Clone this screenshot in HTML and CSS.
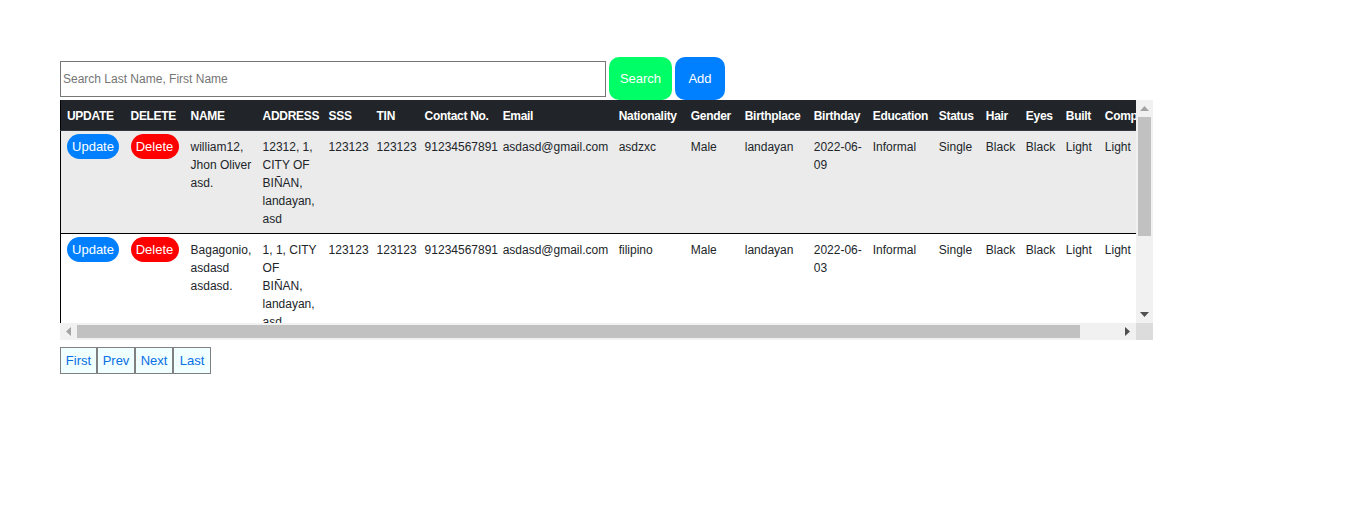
FILE: index.html
```html
<!DOCTYPE html>
<html>
<head>
<meta charset="utf-8">
<link rel="stylesheet" href="styles.css">
</head>
<body>
<div class="page">
  <div class="searchbar">
    <input class="search-input" type="text" placeholder="Search Last Name, First Name">
    <button class="btn-search">Search</button>
    <button class="btn-add">Add</button>
  </div>
  <div class="table-frame">
    <div class="viewport">
      <table class="grid">
        <colgroup>
          <col class="w64"><col class="w60"><col class="w72"><col class="w66"><col class="w48"><col class="w48"><col class="w78"><col class="w116"><col class="w72"><col class="w54"><col class="w69"><col class="w59"><col class="w66"><col class="w47"><col class="w40"><col class="w40"><col class="w39"><col class="w80">
        </colgroup>
        <thead>
          <tr>
            <th>UPDATE</th><th>DELETE</th><th>NAME</th><th>ADDRESS</th><th>SSS</th><th>TIN</th><th>Contact No.</th><th>Email</th><th>Nationality</th><th>Gender</th><th>Birthplace</th><th>Birthday</th><th>Education</th><th>Status</th><th>Hair</th><th>Eyes</th><th>Built</th><th>Complexion</th>
          </tr>
        </thead>
        <tbody>
          <tr class="odd">
            <td><button class="pill pill-blue">Update</button></td>
            <td><button class="pill pill-red">Delete</button></td>
            <td>william12, Jhon Oliver asd.</td>
            <td>12312, 1, CITY OF BIÑAN, landayan, asd</td>
            <td>123123</td><td>123123</td><td>91234567891</td><td>asdasd@gmail.com</td><td>asdzxc</td><td>Male</td><td>landayan</td><td>2022-06-09</td><td>Informal</td><td>Single</td><td>Black</td><td>Black</td><td>Light</td><td>Light</td>
          </tr>
          <tr>
            <td><button class="pill pill-blue">Update</button></td>
            <td><button class="pill pill-red">Delete</button></td>
            <td>Bagagonio, asdasd asdasd.</td>
            <td>1, 1, CITY OF BIÑAN, landayan, asd</td>
            <td>123123</td><td>123123</td><td>91234567891</td><td>asdasd@gmail.com</td><td>filipino</td><td>Male</td><td>landayan</td><td>2022-06-03</td><td>Informal</td><td>Single</td><td>Black</td><td>Black</td><td>Light</td><td>Light</td>
          </tr>
          <tr class="odd">
            <td><button class="pill pill-blue">Update</button></td>
            <td><button class="pill pill-red">Delete</button></td>
            <td>Santos, Maria Clara asd.</td>
            <td>2, 3, CITY OF BIÑAN, landayan, asd</td>
            <td>123123</td><td>123123</td><td>91234567891</td><td>asdasd@gmail.com</td><td>filipino</td><td>Female</td><td>landayan</td><td>2022-06-01</td><td>Informal</td><td>Single</td><td>Black</td><td>Black</td><td>Light</td><td>Light</td>
          </tr>
        </tbody>
      </table>
    </div>
    <div class="vbar">
      <div class="sb-btn"><svg width="9" height="5" viewBox="0 0 9 5"><polygon points="0,5 9,5 4.5,0" fill="#a3a3a3"/></svg></div>
      <div class="vtrack"><div class="vthumb"></div></div>
      <div class="sb-btn"><svg width="9" height="5" viewBox="0 0 9 5"><polygon points="0,0 9,0 4.5,5" fill="#505050"/></svg></div>
    </div>
    <div class="hbar">
      <div class="sb-btn"><svg width="5" height="9" viewBox="0 0 5 9"><polygon points="5,0 5,9 0,4.5" fill="#a3a3a3"/></svg></div>
      <div class="htrack"><div class="hthumb"></div></div>
      <div class="sb-btn"><svg width="5" height="9" viewBox="0 0 5 9"><polygon points="0,0 0,9 5,4.5" fill="#505050"/></svg></div>
    </div>
    <div class="corner"></div>
  </div>
  <div class="pager">
    <button class="pg pg-first">First</button><button class="pg pg-mid">Prev</button><button class="pg pg-mid">Next</button><button class="pg pg-mid">Last</button>
  </div>
</div>
</body>
</html>
```

FILE: styles.css
```css
html, body {
  margin: 0;
  padding: 0;
  background: #ffffff;
}

.page {
  padding: 57px 0 0 60px;
  font-family: "Liberation Sans", Arial, sans-serif;
}

.searchbar {
  display: flex;
  align-items: center;
  gap: 3px;
  height: 43px;
}

.search-input {
  box-sizing: border-box;
  width: 546px;
  height: 36px;
  margin: 0;
  padding: 0 2px;
  border: 1px solid #767676;
  font-family: "Liberation Sans", Arial, sans-serif;
  font-size: 12px;
  color: #222;
  outline: none;
}
.search-input::placeholder {
  color: #757575;
}

.btn-search, .btn-add {
  box-sizing: border-box;
  height: 43px;
  border: none;
  border-radius: 10px;
  color: #ffffff;
  font-family: "Liberation Sans", Arial, sans-serif;
  font-size: 13px;
  padding: 0;
}
.btn-search {
  width: 63px;
  background: #00ff66;
}
.btn-add {
  width: 50px;
  background: #0080ff;
}

/* table frame with fake classic scrollbars */
.table-frame {
  display: grid;
  grid-template-columns: 1076px 17px;
  grid-template-rows: 223px 17px;
  width: 1093px;
}

.viewport {
  overflow: hidden;
}

.vbar {
  display: flex;
  flex-direction: column;
  background: #f1f1f1;
}
.hbar {
  display: flex;
  flex-direction: row;
  background: #f1f1f1;
}
.sb-btn {
  flex: 0 0 17px;
  width: 17px;
  height: 17px;
  display: flex;
  align-items: center;
  justify-content: center;
}
.vtrack {
  flex: 1;
  display: flex;
  flex-direction: column;
}
.vthumb {
  height: 119px;
  margin: 0 2px;
  background: #c1c1c1;
}
.htrack {
  flex: 1;
  display: flex;
  align-items: center;
}
.hthumb {
  width: 1003px;
  height: 13px;
  background: #c1c1c1;
}
.corner {
  background: #dcdcdc;
}

.grid {
  table-layout: fixed;
  width: 1119px;
  border-collapse: collapse;
  border-left: 1px solid #000;
  font-family: "Liberation Sans", Arial, sans-serif;
  font-size: 12px;
  line-height: 18px;
  color: #212529;
}

.w39 { width: 39px; }
.w40 { width: 40px; }
.w47 { width: 47px; }
.w48 { width: 48px; }
.w54 { width: 54px; }
.w59 { width: 59px; }
.w60 { width: 60px; }
.w64 { width: 64px; }
.w66 { width: 66px; }
.w69 { width: 69px; }
.w72 { width: 72px; }
.w78 { width: 78px; }
.w80 { width: 80px; }
.w116 { width: 116px; }

.grid th {
  background: #212529;
  color: #ffffff;
  font-weight: bold;
  text-align: left;
  white-space: nowrap;
  letter-spacing: -0.3px;
  padding: 7px 4px 5px 6px;
  border-bottom: 1px solid #32383e;
  overflow: hidden;
}

.grid td {
  vertical-align: top;
  text-align: left;
  padding: 7px 4px 5px 6px;
  border-bottom: 1px solid #000;
}

.grid tr.odd td {
  background: #ebebeb;
}

.pill {
  box-sizing: border-box;
  height: 25px;
  margin-top: -4px;
  border: none;
  border-radius: 13px;
  color: #ffffff;
  font-family: "Liberation Sans", Arial, sans-serif;
  font-size: 13px;
  padding: 0;
  display: block;
}
.pill-blue {
  width: 52px;
  background: #0080ff;
}
.pill-red {
  width: 48px;
  background: #ff0000;
}

.pager {
  display: flex;
  margin-top: 7px;
}

.pg {
  box-sizing: border-box;
  height: 27px;
  margin: 0;
  padding: 0;
  border: 1px solid #808080;
  background: #f0ffff;
  color: #0a6ee6;
  font-family: "Liberation Sans", Arial, sans-serif;
  font-size: 13px;
  line-height: 25px;
  text-align: center;
}
.pg-first {
  width: 37px;
}
.pg-mid {
  width: 38px;
}
```
